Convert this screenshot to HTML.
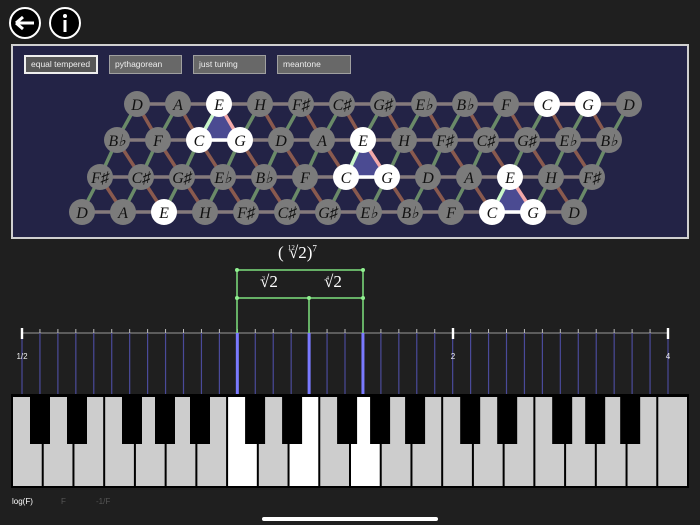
<!DOCTYPE html>
<html><head><meta charset="utf-8"><style>
html,body{margin:0;padding:0;background:#1f1f1f;width:700px;height:525px;overflow:hidden;font-family:"Liberation Sans",sans-serif}
.btn{position:absolute;top:55px;height:19px;background:#686868;border:1px solid #a0a0a0;color:#eee;font-size:8.5px;line-height:16px;padding-left:5px;box-sizing:border-box}
.lbl{position:absolute;font-family:"Liberation Serif",serif;color:#fff}
</style></head><body>
<svg width="700" height="525" style="position:absolute;left:0;top:0" xmlns="http://www.w3.org/2000/svg">
<circle cx="25" cy="23" r="15" fill="#000" stroke="#fff" stroke-width="2"/>
<path d="M16 23H34M16 23l7-6M16 23l7 6" stroke="#fff" stroke-width="3" fill="none"/>
<circle cx="65" cy="23" r="15" fill="#000" stroke="#fff" stroke-width="2"/>
<circle cx="65" cy="16" r="2" fill="#fff"/>
<rect x="63.5" y="20" width="3" height="12" fill="#fff"/>
<rect x="12" y="45" width="676" height="193" fill="#232346" stroke="#d0d0d0" stroke-width="2"/>
<g id="edges"></g>
<g id="nodes"></g>
<g font-family="Liberation Serif,serif" font-style="italic" font-size="16" text-anchor="middle" fill="#111" id="txt">
<text x="137" y="110">D</text><text x="178" y="110">A</text><text x="219" y="110">E</text><text x="260" y="110">H</text><text x="301" y="110">F♯</text><text x="342" y="110">C♯</text><text x="383" y="110">G♯</text><text x="424" y="110">E♭</text><text x="465" y="110">B♭</text><text x="506" y="110">F</text><text x="547" y="110">C</text><text x="588" y="110">G</text><text x="629" y="110">D</text>
<text x="117" y="146">B♭</text><text x="158" y="146">F</text><text x="199" y="146">C</text><text x="240" y="146">G</text><text x="281" y="146">D</text><text x="322" y="146">A</text><text x="363" y="146">E</text><text x="404" y="146">H</text><text x="445" y="146">F♯</text><text x="486" y="146">C♯</text><text x="527" y="146">G♯</text><text x="568" y="146">E♭</text><text x="609" y="146">B♭</text>
<text x="100" y="183">F♯</text><text x="141" y="183">C♯</text><text x="182" y="183">G♯</text><text x="223" y="183">E♭</text><text x="264" y="183">B♭</text><text x="305" y="183">F</text><text x="346" y="183">C</text><text x="387" y="183">G</text><text x="428" y="183">D</text><text x="469" y="183">A</text><text x="510" y="183">E</text><text x="551" y="183">H</text><text x="592" y="183">F♯</text>
<text x="82" y="218">D</text><text x="123" y="218">A</text><text x="164" y="218">E</text><text x="205" y="218">H</text><text x="246" y="218">F♯</text><text x="287" y="218">C♯</text><text x="328" y="218">G♯</text><text x="369" y="218">E♭</text><text x="410" y="218">B♭</text><text x="451" y="218">F</text><text x="492" y="218">C</text><text x="533" y="218">G</text><text x="574" y="218">D</text>
</g>
<g id="ruler"></g>
<g stroke="#7ee07e" stroke-width="1.5" fill="none">
<path d="M237 270H363M237 298H363M237 270V333M363 270V333M309 298V333"/>
</g>
<g fill="#90f090"><circle cx="237" cy="270" r="2"/><circle cx="363" cy="270" r="2"/><circle cx="237" cy="298" r="2"/><circle cx="363" cy="298" r="2"/><circle cx="309" cy="298" r="2"/></g>
<rect x="11" y="394" width="678" height="94" fill="#000"/>
<g id="keys"></g>
<rect x="262" y="517" width="176" height="4" rx="2" fill="#fff"/>
<text x="12" y="504" font-size="8" fill="#fff">log(F)</text>
<text x="61" y="504" font-size="8" fill="#555">F</text>
<text x="96" y="504" font-size="8" fill="#555">-1/F</text>
<text x="22" y="359" font-size="8" fill="#eee" text-anchor="middle">1/2</text>
<text x="453" y="359" font-size="8" fill="#eee" text-anchor="middle">2</text>
<text x="668" y="359" font-size="8" fill="#eee" text-anchor="middle">4</text>
</svg>
<div class="btn" style="left:24px;width:74px;background:#575757;border:2px solid #eee;line-height:15px">equal tempered</div>
<div class="btn" style="left:109px;width:73px">pythagorean</div>
<div class="btn" style="left:193px;width:73px">just tuning</div>
<div class="btn" style="left:277px;width:74px">meantone</div>
<div class="lbl" style="left:278px;top:243px;font-size:17px">( <sup style="font-size:7px;margin-right:-6px;vertical-align:8px">12</sup>√2)<sup style="font-size:9px">7</sup></div>
<div class="lbl" style="left:262px;top:272px;font-size:17px"><sup style="font-size:6px;margin-right:-5px;vertical-align:7px">3</sup>√2</div>
<div class="lbl" style="left:326px;top:272px;font-size:17px"><sup style="font-size:6px;margin-right:-5px;vertical-align:7px">4</sup>√2</div>
<script>
var NS="http://www.w3.org/2000/svg";
function el(p,t,a){var e=document.createElementNS(NS,t);for(var k in a)e.setAttribute(k,a[k]);p.appendChild(e);return e;}
var ry=[104,140,177,212],rx=[137,117,100,82],s=41;
function P(r,i){return [rx[r]+i*s,ry[r]];}
var E=document.getElementById('edges');
function line(a,b,c,w){el(E,'line',{x1:a[0],y1:a[1],x2:b[0],y2:b[1],stroke:c,'stroke-width':w||3.5});}
for(var r=0;r<4;r++)for(var i=0;i<12;i++)line(P(r,i),P(r,i+1),'#857a7c');
for(var r=0;r<3;r++)for(var i=0;i<13;i++){line(P(r+1,i),P(r,i),'#6a8a68');if(i>0)line(P(r,i-1),P(r+1,i),'#8a5a4e');}
function tri(e,c,g){el(E,'polygon',{points:[e,c,g].map(function(p){return p.join(',')}).join(' '),fill:'#4b4b92'});line(c,e,'#c8f5c8');line(e,g,'#f2a8a8');line(c,g,'#fff');}
tri(P(0,2),P(1,2),P(1,3));tri(P(1,6),P(2,6),P(2,7));tri(P(2,10),P(3,10),P(3,11));
line(P(0,10),P(0,11),'#f6e0e0');
var N=document.getElementById('nodes');
var wh={'0,2':1,'0,10':1,'0,11':1,'1,2':1,'1,3':1,'1,6':1,'2,6':1,'2,7':1,'2,10':1,'3,2':1,'3,10':1,'3,11':1};
for(var r=0;r<4;r++)for(var i=0;i<13;i++){var p=P(r,i);el(N,'circle',{cx:p[0],cy:p[1],r:13,fill:wh[r+','+i]?'#fff':'#7b7b7b'});}
var R=document.getElementById('ruler');
el(R,'line',{x1:22,y1:333,x2:668,y2:333,stroke:'#9a9a9a','stroke-width':1});
for(var k=0;k<=36;k++){var x=22+k*646/36;
el(R,'line',{x1:x,y1:333,x2:x,y2:396,stroke:'#4a4a9a','stroke-width':1.2});
el(R,'line',{x1:x,y1:329,x2:x,y2:333,stroke:'#bbb','stroke-width':1});}
[22,453,668].forEach(function(x){el(R,'rect',{x:x-1.2,y:328,width:2.4,height:11,fill:'#fff'});});
[12,16,19].forEach(function(k){var x=22+k*646/36;el(R,'line',{x1:x,y1:333,x2:x,y2:396,stroke:'#7a7aff','stroke-width':3});});
var K=document.getElementById('keys'),w=676/22;
for(var j=0;j<22;j++){var x=12+j*w;el(K,'rect',{x:x+1,y:397,width:w-2,height:89,fill:(j==7||j==9||j==11)?'#fff':'#cdcdcd'});}
var ow=7*w;
for(var o=0;o<3;o++)[18,55,110,143,178].forEach(function(d){el(K,'rect',{x:12+o*ow+d,y:395,width:20,height:49,fill:'#000'});});
</script>
</body></html>
